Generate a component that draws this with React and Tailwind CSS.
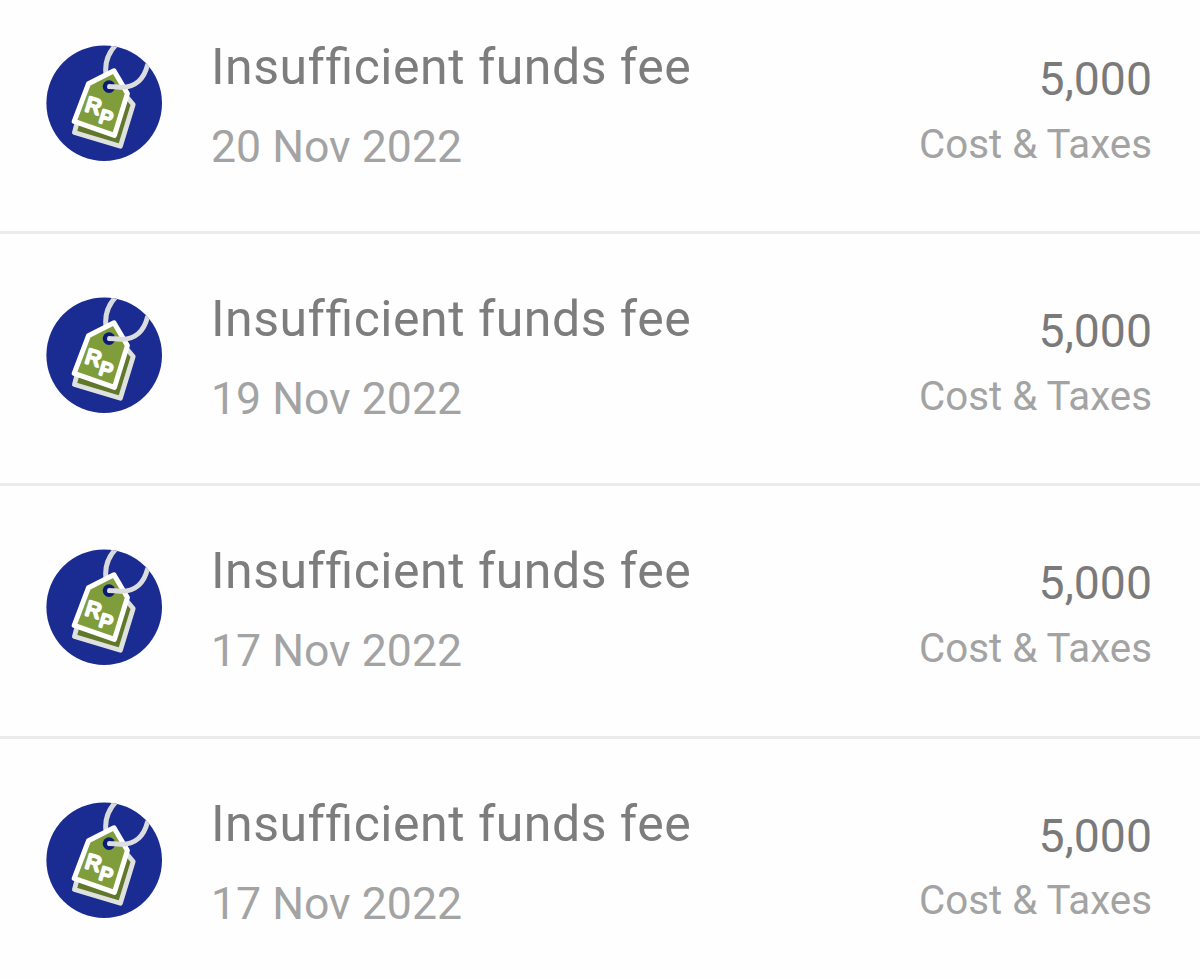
import React from "react";

const transactions = [
  { id: 1, title: "Insufficient funds fee", date: "20 Nov 2022", amount: "5,000", category: "Cost & Taxes" },
  { id: 2, title: "Insufficient funds fee", date: "19 Nov 2022", amount: "5,000", category: "Cost & Taxes" },
  { id: 3, title: "Insufficient funds fee", date: "17 Nov 2022", amount: "5,000", category: "Cost & Taxes" },
  { id: 4, title: "Insufficient funds fee", date: "17 Nov 2022", amount: "5,000", category: "Cost & Taxes" },
];

function PriceTagIcon({ id }) {
  const clip = `badge-${id}`;

  return (
    <svg viewBox="0 0 116 116" className="w-[116px] h-[116px] shrink-0">
      <defs>
        <clipPath id={clip}>
          <circle cx="58.2" cy="58.2" r="57.8" />
        </clipPath>
      </defs>
      <g clipPath={`url(#${clip})`}>
        <rect width="117" height="117" fill="#1a2b91" />

        {/* String behind the tag */}
        <path d="M60.6 33C58 21 61 9 70.5 -1" fill="none" stroke="#d9dadd" strokeWidth="5" />

        {/* Back tag */}
        <path
          d="M75 45L87.2 59.5L74.4 101.3L28.4 87.5L32 74Z"
          fill="#61782c"
          stroke="#dfe1df"
          strokeWidth="4.8"
          strokeLinejoin="round"
        />

        {/* Front tag */}
        <path
          d="M68 25.8L42.4 38.8L28.2 76.3L68.4 90.4L81.4 48.6Z"
          fill="#809d3c"
          stroke="#fff"
          strokeWidth="5"
          strokeLinejoin="round"
        />
        <circle cx="63" cy="41.6" r="6.3" fill="#0b1b78" />

        {/* String through the hole */}
        <path
          d="M63.5 41.5C68 41.7 71 42.4 76 42.2C90 42 98 34 101.5 20"
          fill="none"
          stroke="#dcdde0"
          strokeWidth="5"
          strokeLinecap="round"
        />

        <g
          fill="#fff"
          stroke="#fff"
          strokeWidth="2.4"
          strokeLinejoin="round"
          className="font-['Liberation_Sans',sans-serif]"
        >
          <text fontSize="21.5" transform="translate(38 65.4) rotate(17)">R</text>
          <text fontSize="19.5" transform="translate(52 77) rotate(17)">P</text>
        </g>
      </g>
    </svg>
  );
}

// letter-spacing turns ligatures off, so "fi" gets its ligature back explicitly
function Title({ text }) {
  return (
    <p className="text-[50px] leading-[60px] tracking-[0.5px] text-[#7d7d7d]">
      {text.split(/(fi)/).map((part, i) =>
        part === "fi" ? (
          <span key={i} className="[font-feature-settings:'liga']">{part}</span>
        ) : (
          part
        )
      )}
    </p>
  );
}

function TransactionRow({ item }) {
  return (
    <li className="flex h-[252.33px] pt-[63px] first:h-[234px] first:pt-[45px] pl-[46px] pr-12 border-b-[3px] border-[#ebebeb] last:border-b-0 shrink-0">
      <PriceTagIcon id={item.id} />

      <div className="flex-1 ml-[49px] -mt-2 whitespace-nowrap">
        <Title text={item.title} />
        <p className="mt-5 text-[44.6px] leading-[60px] text-[#a3a3a3]">{item.date}</p>
      </div>

      <div className="text-right whitespace-nowrap pt-1">
        <p className="text-[46.4px] leading-[60px] text-[#7a7a7a]">{item.amount}</p>
        <p className="mt-[5.5px] text-[40.3px] leading-[60px] text-[#a3a3a3]">{item.category}</p>
      </div>
    </li>
  );
}

export default function App() {
  return (
    <main className="h-[979px] overflow-hidden bg-[#fefefe] font-[Roboto,sans-serif]">
      <ul className="flex flex-col">
        {transactions.map((item) => (
          <TransactionRow key={item.id} item={item} />
        ))}
      </ul>
    </main>
  );
}
